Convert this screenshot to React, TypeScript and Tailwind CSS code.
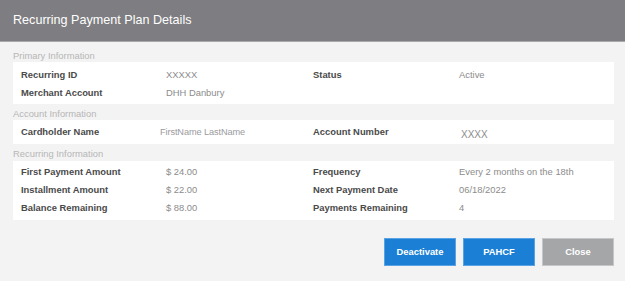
const font = { fontFamily: '"Liberation Sans", Arial, sans-serif' }

interface Row {
  label: string
  value: string
  label2?: string
  value2?: string
}

function Panel({ rows, className = '' }: { rows: Row[]; className?: string }) {
  return (
    <div className={`bg-white px-[8px] ${className}`}>
      {rows.map((r, i) => (
        <div key={i} className="grid grid-cols-[145px_147px_146px_1fr] h-[18px] items-center text-[9.4px]">
          <span className="font-bold text-[#4a4a4a]">{r.label}</span>
          <span className="text-[#8c8c8c]">{r.value}</span>
          <span className="font-bold text-[#4a4a4a]">{r.label2}</span>
          <span className="text-[#8c8c8c]">{r.value2}</span>
        </div>
      ))}
    </div>
  )
}

export default function App() {
  return (
    <div style={font} className="w-[625px] h-[281px] bg-[#f3f3f3] flex flex-col overflow-hidden">
      {/* header */}
      <div className="h-[42px] bg-[#7e7d81] border-b border-[#a9a8ab] flex items-center px-[13px] shrink-0">
        <span className="text-white text-[12.6px]">Recurring Payment Plan Details</span>
      </div>

      <div className="px-[13px] pr-[11px]">
        <div className="pt-[7px] h-[20px] text-[9.4px] leading-[13px] text-[#b6b6b6]">Primary Information</div>
        <Panel
          className="pt-[4px] pb-[2px]"
          rows={[
            { label: 'Recurring ID', value: 'XXXXX', label2: 'Status', value2: 'Active' },
            { label: 'Merchant Account', value: 'DHH Danbury' },
          ]}
        />

        <div className="pt-[3px] h-[16px] text-[9.4px] leading-[13px] text-[#b6b6b6]">Account Information</div>
        <div className="bg-white px-[8px] py-[3px]">
          <div className="grid grid-cols-[145px_147px_146px_1fr] h-[18px] items-center text-[9.4px]">
            <span className="font-bold text-[#4a4a4a]">Cardholder Name</span>
            <span className="text-[#9a9a9e] ml-[-6px] text-[9.2px] tracking-[-0.1px]">FirstName LastName</span>
            <span className="font-bold text-[#4a4a4a]">Account Number</span>
            <span className="text-[#8c8c8c] mt-[4px] ml-[2px] text-[10px]">XXXX</span>
          </div>
        </div>

        <div className="pt-[3px] h-[17px] text-[9.4px] leading-[13px] text-[#b6b6b6]">Recurring Information</div>
        <Panel
          className="pt-[2px] pb-[3px]"
          rows={[
            { label: 'First Payment Amount', value: '$ 24.00', label2: 'Frequency', value2: 'Every 2 months on the 18th' },
            { label: 'Installment Amount', value: '$ 22.00', label2: 'Next Payment Date', value2: '06/18/2022' },
            { label: 'Balance Remaining', value: '$ 88.00', label2: 'Payments Remaining', value2: '4' },
          ]}
        />

        <div className="flex justify-end gap-[7px] mt-[18px]">
          <button className="w-[72px] h-[28px] bg-[#1b7fd5] border border-[#5aa3e3] text-white font-bold text-[9.4px]">
            Deactivate
          </button>
          <button className="w-[72px] h-[28px] bg-[#1b7fd5] border border-[#5aa3e3] text-white font-bold text-[9.4px]">
            PAHCF
          </button>
          <button className="w-[72px] h-[28px] bg-[#a4a6a7] border border-[#c4c6c7] text-white font-bold text-[9.4px]">
            Close
          </button>
        </div>
      </div>
    </div>
  )
}
